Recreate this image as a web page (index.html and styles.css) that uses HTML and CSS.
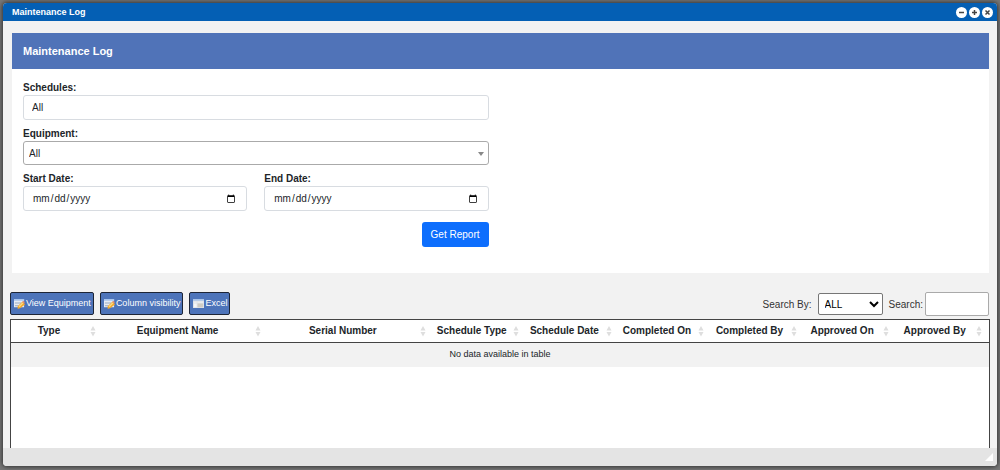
FILE: index.html
```html
<!DOCTYPE html>
<html lang="en">
<head>
<meta charset="utf-8">
<title>Maintenance Log</title>
<link rel="stylesheet" href="styles.css">
</head>
<body>
<svg class="defs" aria-hidden="true">
  <symbol id="sort" viewBox="0 0 6 12"><path d="M3 1 5.5 5.5h-5zM3 11.500 .5 7h5z"/></symbol>
  <symbol id="grid-edit" viewBox="0 0 12 12">
    <path fill="#e6ecf5" d="M0 1h11v9H0z"/>
    <path fill="#a9c6ee" d="M0 1h11v2H0z"/>
    <path fill="#9aa9c0" d="M1 5h7v1H1zM1 8h4v1H1z"/>
    <path fill="#f3a92c" d="m4 9 5-5 3 3-5 4-3 1z"/>
    <path fill="#fbdc86" d="m5 9 4-4 1 1-4 4z"/>
    <path fill="#d98268" d="m9 4 1-1 2 2-1 1z"/>
  </symbol>
  <symbol id="grid" viewBox="0 0 12 12">
    <path fill="#dfe2e6" d="M0 1h12v10H0z"/>
    <path fill="#a9c3e8" d="M0 1h12v2H0z"/>
    <path fill="#f6f7f8" d="M1 4h3v1H1zM5 4h6v1H5zM1 6h3v4H1z"/>
    <path fill="#cfccc4" d="M5 6h6v4H5z"/>
  </symbol>
</svg>
<main class="window">
  <header class="titlebar">
    <span>Maintenance Log</span>
    <div class="window-controls">
      <button type="button" aria-label="Minimize"><svg viewBox="0 0 11 11"><path d="M3 5.500h5"/></svg></button>
      <button type="button" aria-label="Maximize"><svg viewBox="0 0 11 11"><path d="M3 5.500h5M5.500 3v5"/></svg></button>
      <button type="button" aria-label="Close"><svg viewBox="0 0 11 11"><path d="m3.500 3.500 4 4m0-4-4 4"/></svg></button>
    </div>
  </header>
  <div class="content">
    <section class="panel">
      <h1 class="panel-title">Maintenance Log</h1>
      <form class="filters">
        <div class="field">
          <label for="schedules">Schedules:</label>
          <select id="schedules" class="control"><option>All</option></select>
        </div>
        <div class="field">
          <label for="equipment">Equipment:</label>
          <div class="combo">
            <select id="equipment" class="control combo-control"><option>All</option></select>
          </div>
        </div>
        <div class="dates">
          <div class="field">
            <label for="start">Start Date:</label>
            <input id="start" class="control" type="date">
          </div>
          <div class="field">
            <label for="end">End Date:</label>
            <input id="end" class="control" type="date">
          </div>
        </div>
        <button type="button" class="primary">Get Report</button>
      </form>
    </section>
    <div class="toolbar">
      <div class="actions">
        <button type="button" class="tool"><svg><use href="#grid-edit"/></svg>View Equipment</button>
        <button type="button" class="tool"><svg><use href="#grid-edit"/></svg>Column visibility</button>
        <button type="button" class="tool"><svg><use href="#grid"/></svg>Excel</button>
      </div>
      <div class="search">
        <label for="search-by">Search By:</label>
        <select id="search-by" class="search-by"><option>ALL</option></select>
        <label for="search">Search:</label>
        <input id="search" class="search-text" type="text">
      </div>
    </div>
    <div class="table-wrap">
      <table>
        <colgroup>
          <col class="col-type"><col class="col-wide"><col class="col-wide">
          <col><col><col><col><col><col>
        </colgroup>
        <thead>
          <tr>
            <th><div class="head"><span>Type</span><svg><use href="#sort"/></svg></div></th>
            <th><div class="head"><span>Equipment Name</span><svg><use href="#sort"/></svg></div></th>
            <th><div class="head"><span>Serial Number</span><svg><use href="#sort"/></svg></div></th>
            <th><div class="head"><span>Schedule Type</span><svg><use href="#sort"/></svg></div></th>
            <th><div class="head"><span>Schedule Date</span><svg><use href="#sort"/></svg></div></th>
            <th><div class="head"><span>Completed On</span><svg><use href="#sort"/></svg></div></th>
            <th><div class="head"><span>Completed By</span><svg><use href="#sort"/></svg></div></th>
            <th><div class="head"><span>Approved On</span><svg><use href="#sort"/></svg></div></th>
            <th><div class="head"><span>Approved By</span><svg><use href="#sort"/></svg></div></th>
          </tr>
        </thead>
        <tbody>
          <tr><td colspan="9">No data available in table</td></tr>
        </tbody>
      </table>
    </div>
  </div>
  <footer class="statusbar"><svg viewBox="0 0 8 8"><path d="M8 0v8H0z"/></svg></footer>
</main>
</body>
</html>
```

FILE: styles.css
```css
* {
  box-sizing: border-box;
}

body {
  margin: 0;
  min-height: 100vh;
  display: flex;
  padding: 3px 3px 4px;
  background: #777;
  color: #212529;
  font: 10px/15px "Liberation Sans", Arial, sans-serif;
}

button,
input,
select {
  font: inherit;
  color: inherit;
}

.defs {
  position: absolute;
  width: 0;
  height: 0;
}

.window {
  flex: 1;
  min-width: 0;
  display: flex;
  flex-direction: column;
  overflow: hidden;
  border-radius: 4px;
  background: #f2f2f2;
  box-shadow: 0 0 4px 1px #333;
}

.titlebar {
  display: flex;
  align-items: center;
  justify-content: space-between;
  height: 18px;
  padding: 0 4px 0 9px;
  background: #045fb4;
  color: #fff;
  font-size: 9px;
  font-weight: bold;
}

.window-controls {
  display: flex;
  gap: 2px;
}

.window-controls button {
  width: 11px;
  height: 11px;
  padding: 0;
  border: 0;
  border-radius: 50%;
  background: #fff;
}

.window-controls svg {
  display: block;
  width: 11px;
  height: 11px;
  fill: none;
  stroke: #444;
  stroke-width: 1.5;
}

.content {
  flex: 1;
  display: flex;
  flex-direction: column;
  padding: 12px 7px 0;
}

.panel {
  margin: 0 1px 0 2px;
  background: #fff;
}

.panel-title {
  margin: 0;
  padding: 0 11px;
  background: #5073b8;
  color: #fff;
  font-size: 11px;
  line-height: 36px;
}

.filters {
  display: flex;
  flex-direction: column;
  gap: 6px;
  width: 50%;
  padding: 11px 12px 26px 11px;
}

.field {
  display: flex;
  flex-direction: column;
}

.field label {
  font-weight: bold;
}

.control {
  width: 100%;
  height: 25px;
  padding: 0 8px;
  border: 1px solid #d8dce1;
  border-radius: 3px;
  background: #fff;
  appearance: none;
}

.combo {
  position: relative;
}

.combo::after {
  content: "";
  position: absolute;
  top: 11px;
  right: 5px;
  border: 3px solid transparent;
  border-top: 4px solid #888;
  border-bottom: 0;
  pointer-events: none;
}

.combo-control {
  display: block;
  height: 24px;
  padding: 0 5px;
  border-color: #aaa;
}

.dates {
  display: grid;
  grid-template-columns: 1fr 1fr;
  gap: 17px;
}

.primary {
  align-self: flex-end;
  height: 25px;
  margin-top: 5px;
  padding: 0 9px;
  border: 0;
  border-radius: 3px;
  background: #0d6efd;
  color: #fff;
}

.toolbar {
  display: flex;
  justify-content: space-between;
  align-items: flex-start;
  margin: 19px 1px 3px 0;
}

.actions {
  display: flex;
  gap: 6px;
}

.tool {
  display: flex;
  align-items: center;
  gap: 1px;
  height: 23px;
  padding: 0 2px 0 3px;
  border: 1px solid #1d2536;
  border-radius: 2px;
  background: #4d74ba;
  color: #fff;
  font-size: 9px;
}

.tool svg {
  width: 11px;
  height: 11px;
}

.search {
  display: flex;
  align-items: center;
  color: #333;
}

.search-by {
  width: 65px;
  height: 22px;
  margin: 0 6px;
  padding: 0 2px;
  border: 1px solid #767676;
  border-radius: 2px;
  background: #fff;
  color: #000;
}

.search-text {
  width: 64px;
  height: 24px;
  margin-left: 2px;
  border: 1px solid #aaa;
  border-radius: 2px;
  background: #fff;
}

.table-wrap {
  flex: 1;
  border: 1px solid #444;
  border-bottom: 0;
  background: #fff;
}

table {
  width: 100%;
  table-layout: fixed;
  border-collapse: collapse;
}

.col-type {
  width: 9.4%;
}

.col-wide {
  width: 16.9%;
}

th {
  height: 22px;
  padding: 0;
  border-bottom: 1px solid #444;
}

.head {
  display: flex;
  align-items: center;
  gap: 4px;
  padding: 0 7px 0 1px;
  white-space: nowrap;
}

.head span {
  flex: 1;
}

.head svg {
  flex: none;
  width: 6px;
  height: 12px;
  fill: #dedede;
}

td {
  height: 25px;
  padding: 0;
  background: #f2f2f2;
  font-size: 9px;
  text-align: center;
}

.statusbar {
  display: flex;
  align-items: center;
  justify-content: flex-end;
  height: 18px;
  padding-right: 4px;
  background: #e4e4e4;
}

.statusbar svg {
  width: 8px;
  height: 8px;
  fill: #fff;
}
```
